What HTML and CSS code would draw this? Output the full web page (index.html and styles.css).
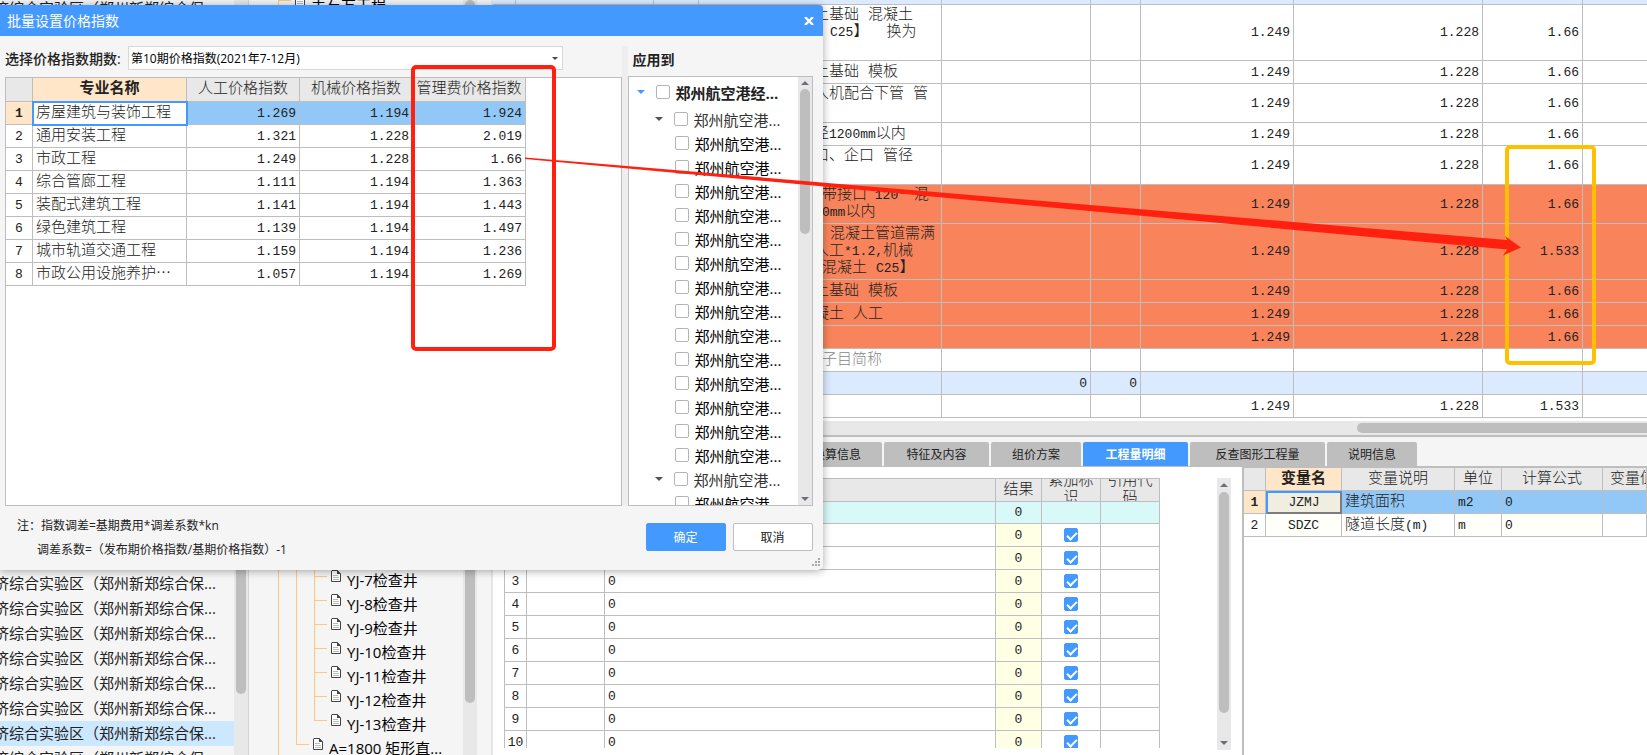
FILE: index.html
```html
<!DOCTYPE html>
<html lang="zh-CN">
<head>
<meta charset="utf-8">
<title>批量设置价格指数</title>
<link rel="stylesheet" href="styles.css">
</head>
<body>
<svg class="defs" aria-hidden="true">
  <symbol id="doc" viewBox="0 0 10 12"><path d="M.5 1v10.500h9V4L6.500.5H1z" fill="#fff" stroke="#444"/><path d="M6 0v4h4z" fill="#444"/><path d="M2 5.500h5M2 7.500h6M2 9.500h6" stroke="#bbb"/></symbol>
  <symbol id="down" viewBox="0 0 8 4"><path d="M0 0h8L4 4z" fill="currentColor"/></symbol>
  <symbol id="up" viewBox="0 0 8 4"><path d="M0 4h8L4 0z" fill="currentColor"/></symbol>
</svg>
<div class="app">
  <aside class="projects">
    <ul class="project-list">
      <li>济综合实验区（郑州新郑综合保...</li>
      <li class="push">济综合实验区（郑州新郑综合保...</li>
      <li>济综合实验区（郑州新郑综合保...</li>
      <li>济综合实验区（郑州新郑综合保...</li>
      <li>济综合实验区（郑州新郑综合保...</li>
      <li>济综合实验区（郑州新郑综合保...</li>
      <li>济综合实验区（郑州新郑综合保...</li>
      <li class="current">济综合实验区（郑州新郑综合保...</li>
      <li>济综合实验区（郑州新郑综合保...</li>
    </ul>
    <div class="vbar projects-bar"><span class="thumb"></span></div>
  </aside>
  <aside class="sections">
    <ul class="tree">
      <li class="node"><svg class="doc"><use href="#doc"/></svg>土石方工程</li>
      <li class="branch">
        <ul class="sub">
          <li class="branch">
            <ul class="sub leafs">
              <li class="node"><svg class="doc"><use href="#doc"/></svg>YJ-7检查井</li>
              <li class="node"><svg class="doc"><use href="#doc"/></svg>YJ-8检查井</li>
              <li class="node"><svg class="doc"><use href="#doc"/></svg>YJ-9检查井</li>
              <li class="node"><svg class="doc"><use href="#doc"/></svg>YJ-10检查井</li>
              <li class="node"><svg class="doc"><use href="#doc"/></svg>YJ-11检查井</li>
              <li class="node"><svg class="doc"><use href="#doc"/></svg>YJ-12检查井</li>
              <li class="node last"><svg class="doc"><use href="#doc"/></svg>YJ-13检查井</li>
            </ul>
          </li>
          <li class="node last"><svg class="doc"><use href="#doc"/></svg>A=1800 矩形直...</li>
        </ul>
      </li>
    </ul>
    <div class="vbar sections-bar"><span class="thumb"></span></div>
  </aside>
  <main class="work">
    <div class="items">
      <table class="grid items-grid">
        <colgroup><col class="w23"><col class="w138"><col class="w45"><col class="w243"><col class="w149"><col class="w50"><col class="w153"><col class="w189"><col class="w100"><col></colgroup>
        <tbody>
        <tr class="total"><td></td><td></td><td></td><td></td><td></td><td></td><td></td><td></td><td></td><td></td></tr>
        <tr class="h3"><td></td><td></td><td></td><td class="name"><p>土基础 混凝土</p><p class="in2"><span>C25</span>】  换为</p><p>&nbsp;</p></td><td></td><td></td><td class="num">1.249</td><td class="num">1.228</td><td class="num">1.66</td><td></td></tr>
        <tr><td></td><td></td><td></td><td class="name"><p>土基础 模板</p></td><td></td><td></td><td class="num">1.249</td><td class="num">1.228</td><td class="num">1.66</td><td></td></tr>
        <tr class="h2"><td></td><td></td><td></td><td class="name"><p>人机配合下管 管</p><p>&nbsp;</p></td><td></td><td></td><td class="num">1.249</td><td class="num">1.228</td><td class="num">1.66</td><td></td></tr>
        <tr><td></td><td></td><td></td><td class="name"><p>径<span>1200mm</span>以内</p></td><td></td><td></td><td class="num">1.249</td><td class="num">1.228</td><td class="num">1.66</td><td></td></tr>
        <tr class="h2"><td></td><td></td><td></td><td class="name"><p>口、企口 管径</p><p>&nbsp;</p></td><td></td><td></td><td class="num">1.249</td><td class="num">1.228</td><td class="num">1.66</td><td></td></tr>
        <tr class="h2 hot"><td></td><td></td><td></td><td class="name"><p class="in1">带接口<span> 120° </span>混</p><p class="in1"><span>0mm</span>以内</p></td><td></td><td></td><td class="num">1.249</td><td class="num">1.228</td><td class="num">1.66</td><td></td></tr>
        <tr class="h3 hot"><td></td><td></td><td></td><td class="name"><p class="in2">混凝土管道需满</p><p>人工<span>*1.2,</span>机械</p><p class="in1">混凝土 <span>C25</span>】</p></td><td></td><td></td><td class="num">1.249</td><td class="num">1.228</td><td class="num">1.533</td><td></td></tr>
        <tr class="hot"><td></td><td></td><td></td><td class="name"><p>土基础 模板</p></td><td></td><td></td><td class="num">1.249</td><td class="num">1.228</td><td class="num">1.66</td><td></td></tr>
        <tr class="hot"><td></td><td></td><td></td><td class="name"><p>凝土 人工</p></td><td></td><td></td><td class="num">1.249</td><td class="num">1.228</td><td class="num">1.66</td><td></td></tr>
        <tr class="hot"><td></td><td></td><td></td><td></td><td></td><td></td><td class="num">1.249</td><td class="num">1.228</td><td class="num">1.66</td><td></td></tr>
        <tr><td></td><td></td><td></td><td class="name hint"><p class="in1">子目简称</p></td><td></td><td></td><td></td><td></td><td></td><td></td></tr>
        <tr class="total"><td></td><td></td><td></td><td></td><td class="num">0</td><td class="num">0</td><td></td><td></td><td></td><td></td></tr>
        <tr><td></td><td></td><td></td><td></td><td></td><td></td><td class="num">1.249</td><td class="num">1.228</td><td class="num">1.533</td><td></td></tr>
        </tbody>
      </table>
      <div class="hbar"><span class="hthumb"></span></div>
    </div>
    <nav class="tabs" role="tablist">
      <button class="tab t90" role="tab">换算信息</button>
      <button class="tab t105" role="tab">特征及内容</button>
      <button class="tab t90" role="tab">组价方案</button>
      <button class="tab t105 active" role="tab" aria-selected="true">工程量明细</button>
      <button class="tab t135" role="tab">反查图形工程量</button>
      <button class="tab t90" role="tab">说明信息</button>
    </nav>
    <div class="details">
      <section class="quantities">
        <div class="clip">
          <table class="grid qty-grid">
            <colgroup><col class="w23"><col class="w78"><col><col class="w46"><col class="w59"><col class="w59"></colgroup>
            <thead><tr><th></th><th></th><th></th><th>结果</th><th><div class="wrap">累加标识</div></th><th><div class="wrap">引用代码</div></th></tr></thead>
            <tbody>
            <tr class="sum"><td></td><td></td><td></td><td class="res">0</td><td></td><td></td></tr>
            <tr><td class="no">1</td><td></td><td>0</td><td class="res">0</td><td class="mid"><input type="checkbox" checked aria-label="累加标识 1"></td><td></td></tr>
            <tr><td class="no">2</td><td></td><td>0</td><td class="res">0</td><td class="mid"><input type="checkbox" checked aria-label="累加标识 2"></td><td></td></tr>
            <tr><td class="no">3</td><td></td><td>0</td><td class="res">0</td><td class="mid"><input type="checkbox" checked aria-label="累加标识 3"></td><td></td></tr>
            <tr><td class="no">4</td><td></td><td>0</td><td class="res">0</td><td class="mid"><input type="checkbox" checked aria-label="累加标识 4"></td><td></td></tr>
            <tr><td class="no">5</td><td></td><td>0</td><td class="res">0</td><td class="mid"><input type="checkbox" checked aria-label="累加标识 5"></td><td></td></tr>
            <tr><td class="no">6</td><td></td><td>0</td><td class="res">0</td><td class="mid"><input type="checkbox" checked aria-label="累加标识 6"></td><td></td></tr>
            <tr><td class="no">7</td><td></td><td>0</td><td class="res">0</td><td class="mid"><input type="checkbox" checked aria-label="累加标识 7"></td><td></td></tr>
            <tr><td class="no">8</td><td></td><td>0</td><td class="res">0</td><td class="mid"><input type="checkbox" checked aria-label="累加标识 8"></td><td></td></tr>
            <tr><td class="no">9</td><td></td><td>0</td><td class="res">0</td><td class="mid"><input type="checkbox" checked aria-label="累加标识 9"></td><td></td></tr>
            <tr><td class="no">10</td><td></td><td>0</td><td class="res">0</td><td class="mid"><input type="checkbox" checked aria-label="累加标识 10"></td><td></td></tr>
            </tbody>
          </table>
        </div>
        <div class="vbar qty-bar"><svg class="arrow"><use href="#up"/></svg><span class="thumb"></span><svg class="arrow"><use href="#down"/></svg></div>
      </section>
      <section class="variables">
        <table class="grid var-grid">
          <colgroup><col class="w22"><col class="w76"><col class="w113"><col class="w47"><col class="w101"><col></colgroup>
          <thead><tr><th></th><th class="key">变量名</th><th>变量说明</th><th>单位</th><th>计算公式</th><th class="cut">变量值</th></tr></thead>
          <tbody>
          <tr class="picked"><td class="no key">1</td><td class="mid cell-on">JZMJ</td><td class="cjk">建筑面积</td><td>m2</td><td>0</td><td></td></tr>
          <tr><td class="no">2</td><td class="mid soft">SDZC</td><td class="cjk">隧道长度<span>(m)</span></td><td class="soft">m</td><td class="soft">0</td><td></td></tr>
          </tbody>
        </table>
      </section>
    </div>
  </main>
</div>

<div class="dialog" role="dialog" aria-labelledby="dlg-title">
  <header class="titlebar">
    <h1 id="dlg-title">批量设置价格指数</h1>
    <button class="close" aria-label="关闭"><svg viewBox="0 0 10 8"><path d="M1 0l8 8M9 0L1 8" stroke="#fff" stroke-width="2.400"/></svg></button>
  </header>
  <div class="dialog-body">
    <div class="left">
      <div class="period">
        <label for="period">选择价格指数期数:</label>
        <div class="combo">
          <select id="period"><option>第10期价格指数(2021年7-12月)</option></select>
          <svg class="combo-arrow"><use href="#down"/></svg>
        </div>
      </div>
      <div class="frame">
        <table class="grid index-grid">
          <colgroup><col class="w27"><col class="w154"><col class="w113"><col class="w113"><col class="w113"></colgroup>
          <thead><tr><th></th><th class="key">专业名称</th><th>人工价格指数</th><th>机械价格指数</th><th>管理费价格指数</th></tr></thead>
          <tbody>
          <tr class="picked"><td class="no key">1</td><td class="cjk editing">房屋建筑与装饰工程</td><td class="num">1.269</td><td class="num">1.194</td><td class="num">1.924</td></tr>
          <tr><td class="no">2</td><td class="cjk">通用安装工程</td><td class="num">1.321</td><td class="num">1.228</td><td class="num">2.019</td></tr>
          <tr><td class="no">3</td><td class="cjk">市政工程</td><td class="num">1.249</td><td class="num">1.228</td><td class="num">1.66</td></tr>
          <tr><td class="no">4</td><td class="cjk">综合管廊工程</td><td class="num">1.111</td><td class="num">1.194</td><td class="num">1.363</td></tr>
          <tr><td class="no">5</td><td class="cjk">装配式建筑工程</td><td class="num">1.141</td><td class="num">1.194</td><td class="num">1.443</td></tr>
          <tr><td class="no">6</td><td class="cjk">绿色建筑工程</td><td class="num">1.139</td><td class="num">1.194</td><td class="num">1.497</td></tr>
          <tr><td class="no">7</td><td class="cjk">城市轨道交通工程</td><td class="num">1.159</td><td class="num">1.194</td><td class="num">1.236</td></tr>
          <tr><td class="no">8</td><td class="cjk">市政公用设施养护⋯</td><td class="num">1.057</td><td class="num">1.194</td><td class="num">1.269</td></tr>
          </tbody>
        </table>
      </div>
    </div>
    <div class="splitter"></div>
    <div class="right">
      <h2>应用到</h2>
      <div class="frame scope">
        <ul class="targets">
          <li class="root"><svg class="fold"><use href="#down"/></svg><label><input type="checkbox">郑州航空港经...</label></li>
          <li class="group"><svg class="fold"><use href="#down"/></svg><label><input type="checkbox">郑州航空港...</label></li>
          <li><label><input type="checkbox">郑州航空港...</label></li>
          <li><label><input type="checkbox">郑州航空港...</label></li>
          <li><label><input type="checkbox">郑州航空港...</label></li>
          <li><label><input type="checkbox">郑州航空港...</label></li>
          <li><label><input type="checkbox">郑州航空港...</label></li>
          <li><label><input type="checkbox">郑州航空港...</label></li>
          <li><label><input type="checkbox">郑州航空港...</label></li>
          <li><label><input type="checkbox">郑州航空港...</label></li>
          <li><label><input type="checkbox">郑州航空港...</label></li>
          <li><label><input type="checkbox">郑州航空港...</label></li>
          <li><label><input type="checkbox">郑州航空港...</label></li>
          <li><label><input type="checkbox">郑州航空港...</label></li>
          <li><label><input type="checkbox">郑州航空港...</label></li>
          <li><label><input type="checkbox">郑州航空港...</label></li>
          <li class="group"><svg class="fold"><use href="#down"/></svg><label><input type="checkbox">郑州航空港...</label></li>
          <li><label><input type="checkbox">郑州航空港...</label></li>
        </ul>
        <div class="vbar scope-bar"><svg class="arrow"><use href="#up"/></svg><span class="thumb"></span><svg class="arrow"><use href="#down"/></svg></div>
      </div>
    </div>
  </div>
  <footer class="dialog-foot">
    <div class="notes">
      <p>注：指数调差=基期费用*调差系数*kn</p>
      <p class="second">调差系数=（发布期价格指数/基期价格指数）-1</p>
    </div>
    <div class="actions">
      <button class="btn primary">确定</button>
      <button class="btn">取消</button>
    </div>
  </footer>
  <svg class="grip" viewBox="0 0 8 8"><path d="M6 0h2v2H6zM3 3h2v2H3zM6 3h2v2H6zM0 6h2v2H0zM3 6h2v2H3zM6 6h2v2H6z" fill="#aaa"/></svg>
</div>

<svg class="marks" aria-hidden="true">
  <rect x="413" y="67" width="141" height="282" rx="3" fill="none" stroke="#ff2010" stroke-width="4"/>
  <rect x="1507" y="147" width="87" height="216" rx="3" fill="none" stroke="#ffc000" stroke-width="4"/>
  <path d="M525 157.500L1507 240L1505 236L1521 247.500L1503 255.500L1507 249.500L525 159z" fill="#ff2010"/>
</svg>
</body>
</html>
```

FILE: styles.css
```css
* { box-sizing: border-box; }
html, body { height: 100%; }
body {
  margin: 0;
  position: relative;
  overflow: hidden;
  background: #f5f5f5;
  color: #222;
  font-family: "Open Sans", "Noto Sans CJK SC", sans-serif;
  font-size: 15px;
}
ul, p, h1, h2 { margin: 0; padding: 0; list-style: none; }
button, select, input { font: inherit; color: inherit; margin: 0; }
.defs { position: absolute; width: 0; height: 0; }

.app { display: flex; height: 100%; }

/* scroll bars */
.vbar {
  flex: none;
  width: 14px;
  display: flex;
  flex-direction: column;
  align-items: center;
  background: #e8e8e8;
}
.thumb { width: 10px; border-radius: 5px; background: #bebebe; }
.arrow { width: 8px; height: 4px; color: #6e6e7a; margin: 5px 0; flex: none; }

/* project list */
.projects { flex: none; width: 249px; display: flex; border-right: 1px solid #d4d4d4; overflow: hidden; }
.project-list { flex: 1; min-width: 0; display: flex; flex-direction: column; margin: -4px 0 -16px; }
.project-list li { flex: none; height: 25px; line-height: 25px; margin: 0; text-indent: -6px; white-space: nowrap; }
.project-list .push { margin-top: auto; }
.project-list .current { background: #cce8ff; }
.projects-bar .thumb { height: 294px; margin-top: 400px; }

/* section tree */
.sections { flex: none; width: 244px; display: flex; border-right: 2px solid #e6e6e6; overflow: hidden; color: #000; }
.tree { flex: 1; min-width: 0; display: flex; flex-direction: column; margin: -9px 0 -4px 29px; }
.node {
  position: relative;
  flex: none;
  display: flex;
  align-items: center;
  gap: 6px;
  height: 24px;
  padding-left: 17px;
  white-space: nowrap;
}
.node::before { content: ""; position: absolute; left: 0; top: 9px; width: 13px; border-top: 1px solid #ffc978; }
.node::after { content: ""; position: absolute; left: 0; top: 0; height: 24px; border-left: 1px solid #ffc978; }
.node.last::after { height: 10px; }
.doc { width: 10px; height: 12px; margin-bottom: 6px; }
.branch { flex: 1; display: flex; border-left: 1px solid #ffc978; }
.sub { flex: 1; display: flex; flex-direction: column; justify-content: flex-end; margin-left: 17px; }

.sections-bar { margin-right: 14px; }
.sections-bar .thumb { height: 703px; }

/* grids */
.work { flex: 1; min-width: 0; display: flex; flex-direction: column; background: #fff; }
.grid {
  border-collapse: separate;
  border-spacing: 0;
  table-layout: fixed;
  width: 100%;
  font-family: "Liberation Mono", "Noto Sans CJK SC", monospace;
  font-size: 13px;
  font-weight: 300;
  line-height: 17px;
}
.grid tr { height: 23px; }
.grid th, .grid td {
  padding: 0 3px;
  border-right: 1px solid #bebebe;
  border-bottom: 1px solid #bebebe;
  text-align: left;
  white-space: nowrap;
}
.grid th { padding: 0; background: #e8e8e8; font-size: 15px; font-weight: 300; text-align: center; }
.grid .num { text-align: right; }
.grid .no, .grid .mid, .grid .res { text-align: center; padding: 0; }
.grid .cjk { font-size: 15px; }
.grid .cjk span, .name span { font-size: 13px; }
.grid .key { background: #ffe6c8; font-weight: 700; }
.grid .picked td { background: #91c8f7; }
.grid .picked .key { background: #ffe6c8; }
.grid .soft { background: #fffffa; }

.w22 { width: 22px; } .w23 { width: 23px; } .w27 { width: 27px; } .w45 { width: 45px; }
.w46 { width: 46px; } .w47 { width: 47px; } .w50 { width: 50px; } .w59 { width: 59px; }
.w76 { width: 76px; } .w78 { width: 78px; } .w100 { width: 100px; } .w101 { width: 101px; }
.w113 { width: 113px; } .w138 { width: 138px; } .w149 { width: 149px; } .w153 { width: 153px; }
.w154 { width: 154px; } .w189 { width: 189px; } .w243 { width: 243px; }

.items { flex: none; overflow: hidden; border-bottom: 2px solid #bebebe; }
.items-grid { margin: -18px 0 3px; }
.items-grid .h2 { height: 39px; }
.items-grid .h3 { height: 56px; }
.items-grid .name { padding: 0 0 0 115px; font-size: 15px; white-space: pre; }
.name p { height: 17px; }
.name .in1 { padding-left: 8px; }
.name .in2 { padding-left: 16px; }
.name.hint { color: #888; }
.total td { background: #dceaff; }
.hot td { background: #f9845b; }
.items-grid td:last-child { border-right: 0; }
.hbar { height: 14px; padding: 2px 0; background: #e8e8e8; display: flex; justify-content: flex-end; }
.hthumb { width: 290px; border-radius: 5px 0 0 5px; background: #bebebe; }

/* tabs */
.tabs {
  flex: none;
  display: flex;
  gap: 2px;
  padding: 5px 0 0 299px;
  background: #f5f5f5;
  border-bottom: 1px solid #bebebe;
}
.tab { flex: none; height: 24px; padding: 0; border: 0; border-radius: 2px 2px 0 0; background: #bebebe; font-size: 12px; }
.tab.active { background: #4499ff; color: #fff; font-weight: 700; }
.t90 { width: 90px; } .t105 { width: 105px; } .t135 { width: 135px; }

/* detail panes */
.details { flex: 1; min-height: 0; display: flex; }
.quantities { flex: 1; min-width: 0; display: flex; gap: 57px; padding: 11px 11px 5px; }
.clip { flex: 1; min-width: 0; overflow: hidden; margin-bottom: 2px; }
.qty-grid { border-top: 1px solid #bebebe; }
.qty-grid th:first-child, .qty-grid td:first-child { border-left: 1px solid #bebebe; }
.wrap { display: flex; align-items: center; height: 22px; padding: 0 6px; overflow: hidden; white-space: normal; }
.sum { background: #d9f8f8; }
.grid .sum, .grid thead tr { height: 23px; }
.grid tr.sum { height: 22px; }
.res { background: #ffffe6; }
.sum .res { background: none; }
.qty-bar .thumb { flex: none; height: 221px; }
.qty-bar .arrow:last-child, .scope-bar .arrow:last-child { margin-top: auto; }
.variables { flex: none; width: 405px; border-left: 2px solid #bebebe; border-top: 1px solid #bebebe; overflow: hidden; }
.grid .cut { text-align: left; padding-left: 7px; overflow: hidden; }
.grid .picked .cell-on {
  background: #f0eee0;
  border: 2px solid #7c7c7c;
  border-top-color: #4499ff;
  border-left-color: #4499ff;
}

/* check boxes */
input[type="checkbox"] {
  appearance: none;
  flex: none;
  display: block;
  position: relative;
  width: 14px;
  height: 14px;
  border: 1px solid #b4b4b4;
  border-radius: 2px;
  background: #fff;
}
input[type="checkbox"]:checked { background: #4499ff; border-color: #4499ff; }
input[type="checkbox"]:checked::after {
  content: "";
  position: absolute;
  left: 4px;
  top: 1px;
  width: 4px;
  height: 8px;
  border: solid #fff;
  border-width: 0 2px 2px 0;
  transform: rotate(45deg);
}
.mid input[type="checkbox"] { margin: 0 auto; }

/* dialog */
.dialog {
  position: absolute;
  left: 0;
  top: 5px;
  width: calc(50% - 1px);
  background: #f5f5f5;
  border-radius: 0 5px 5px 0;
  box-shadow: 0 1px 8px rgba(0, 0, 0, .35);
}
.titlebar {
  display: flex;
  align-items: center;
  justify-content: space-between;
  height: 31px;
  padding: 0 9px 0 7px;
  background: #4499ff;
  border-radius: 0 4px 0 0;
  color: #fff;
}
.titlebar h1 { font-size: 14px; font-weight: 400; line-height: 31px; }
.close { display: flex; padding: 0; border: 0; background: none; }
.close svg { width: 10px; height: 8px; }
.dialog-body { display: flex; padding: 10px 10px 0 5px; }
.left { flex: 1; min-width: 0; display: flex; flex-direction: column; gap: 7px; }
.period { display: flex; align-items: center; gap: 7px; height: 24px; }
.period label { flex: none; width: 116px; font-size: 14px; font-weight: 500; white-space: nowrap; }
.combo { position: relative; width: 435px; height: 24px; }
.combo select {
  appearance: none;
  width: 100%;
  height: 24px;
  padding: 0 2px;
  border: 1px solid #d8d8d8;
  border-radius: 0;
  background: #fff;
  color: #000;
  font-size: 12px;
}
.combo-arrow { position: absolute; right: 5px; top: 11px; width: 6px; height: 3px; color: #444; pointer-events: none; }
.frame { height: 429px; border: 1px solid #bebebe; background: #fff; overflow: hidden; }
.index-grid { width: 520px; }
.index-grid thead tr { height: 24px; }
.grid .editing { position: relative; }
.grid .picked .editing { background: #fff; outline: 2px solid #4499ff; outline-offset: -1px; }
.splitter { flex: none; width: 6px; background: #eee; }
.right { flex: none; width: 185px; }
.right h2 { height: 30px; padding-left: 5px; font-size: 14px; font-weight: 700; line-height: 28px; }
.scope { display: flex; height: 430px; }
.targets { flex: 1; min-width: 0; color: #000; }
.targets li { display: flex; align-items: center; height: 24px; padding-left: 46px; }
.targets label { display: flex; align-items: center; gap: 6px; white-space: nowrap; }
.targets .group { padding-left: 26px; color: #333; }
.targets .root { height: 30px; padding-left: 8px; font-weight: 700; color: #222; }
.fold { width: 8px; height: 4px; color: #555; }
.group .fold { margin-right: 11px; }
.root .fold { margin-right: 11px; color: #4499ff; }
.scope-bar .arrow { margin: 4px 0; }
.scope-bar .thumb { flex: none; height: 145px; }
.dialog-foot { display: flex; justify-content: space-between; height: 64px; padding: 8px 10px 0 17px; }
.notes { font-size: 12px; line-height: 24px; }
.notes .second { padding-left: 20px; }
.actions { display: flex; gap: 7px; padding-top: 9px; }
.btn { width: 80px; height: 28px; padding: 0; border: 1px solid #bebebe; border-radius: 2px; background: #fff; font-size: 12px; }
.btn.primary { background: #4499ff; border-color: #4499ff; color: #fff; }
.grip { position: absolute; right: 3px; bottom: 4px; width: 8px; height: 8px; }

.marks { position: absolute; left: 0; top: 0; width: 100%; height: 100%; pointer-events: none; }
```
